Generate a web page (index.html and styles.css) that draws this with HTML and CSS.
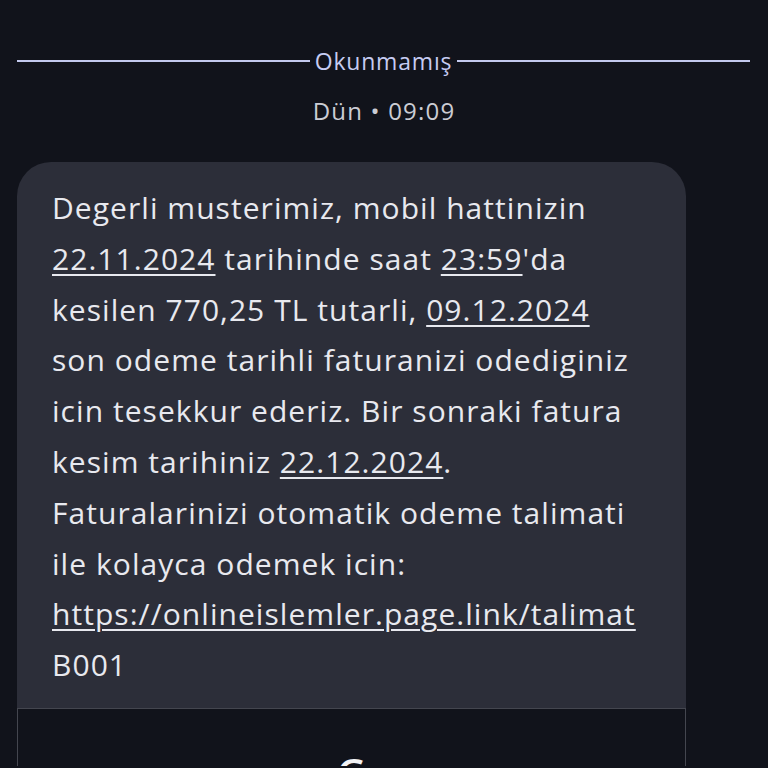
FILE: index.html
```html
<!DOCTYPE html>
<html lang="tr">
<head>
<meta charset="utf-8">
<link rel="stylesheet" href="styles.css">
</head>
<body>
<div class="divider">
  <span class="line"></span>
  <span class="label">Okunmamış</span>
  <span class="line"></span>
</div>
<div class="stamp">Dün • 09:09</div>
<div class="thread">
  <div class="bubble">
    <p class="msg">Degerli musterimiz, mobil hattinizin<br><u>22.11.2024</u> tarihinde saat <u>23:59</u>'da<br>kesilen 770,25 TL tutarli, <u>09.12.2024</u><br>son odeme tarihli faturanizi odediginiz<br>icin tesekkur ederiz. Bir sonraki fatura<br>kesim tarihiniz <u>22.12.2024</u>.<br>Faturalarinizi otomatik odeme talimati<br>ile kolayca odemek icin:<br><u>https://onlineislemler.page.link/talimat</u><br>B001</p>
  </div>
  <div class="preview">
    <span class="glyph">G</span>
  </div>
</div>
</body>
</html>
```
FILE: styles.css
```css
html, body {
  margin: 0;
  padding: 0;
  background: #11131b;
  height: 768px;
  overflow: hidden;
}
body {
  font-family: "Open Sans", Roboto, sans-serif;
}
.divider {
  display: flex;
  align-items: center;
  gap: 5px;
  padding: 47px 18px 0 17px;
  height: 28px;
}
.line {
  flex: 1;
  height: 2px;
  background: #c3c9ee;
}
.label {
  color: #c6ccf2;
  font-size: 23px;
  letter-spacing: 0.8px;
  line-height: 28px;
}
.stamp {
  text-align: center;
  color: #cbccd4;
  font-size: 24px;
  letter-spacing: 1.2px;
  line-height: 28px;
  margin-top: 22px;
}
.thread {
  margin: 37px 0 0 17px;
  width: 669px;
}
.bubble {
  background: #2c2e39;
  border-radius: 34px 34px 0 0;
  padding: 21px 20px 17px 35px;
}
.msg {
  margin: 0;
  color: #e8e9ef;
  font-size: 30px;
  letter-spacing: 1.05px;
  line-height: 50.8px;
  white-space: nowrap;
}
.msg u {
  text-decoration-thickness: 2px;
  text-underline-offset: 4px;
}
.preview {
  height: 58px;
  overflow: hidden;
  border: 1.5px solid #44464f;
  border-bottom: none;
  display: flex;
  justify-content: center;
  padding-top: 44px;
  box-sizing: border-box;
}
.glyph {
  color: #f2f2f5;
  font-size: 40px;
  font-weight: 600;
  line-height: 40px;
}
```
